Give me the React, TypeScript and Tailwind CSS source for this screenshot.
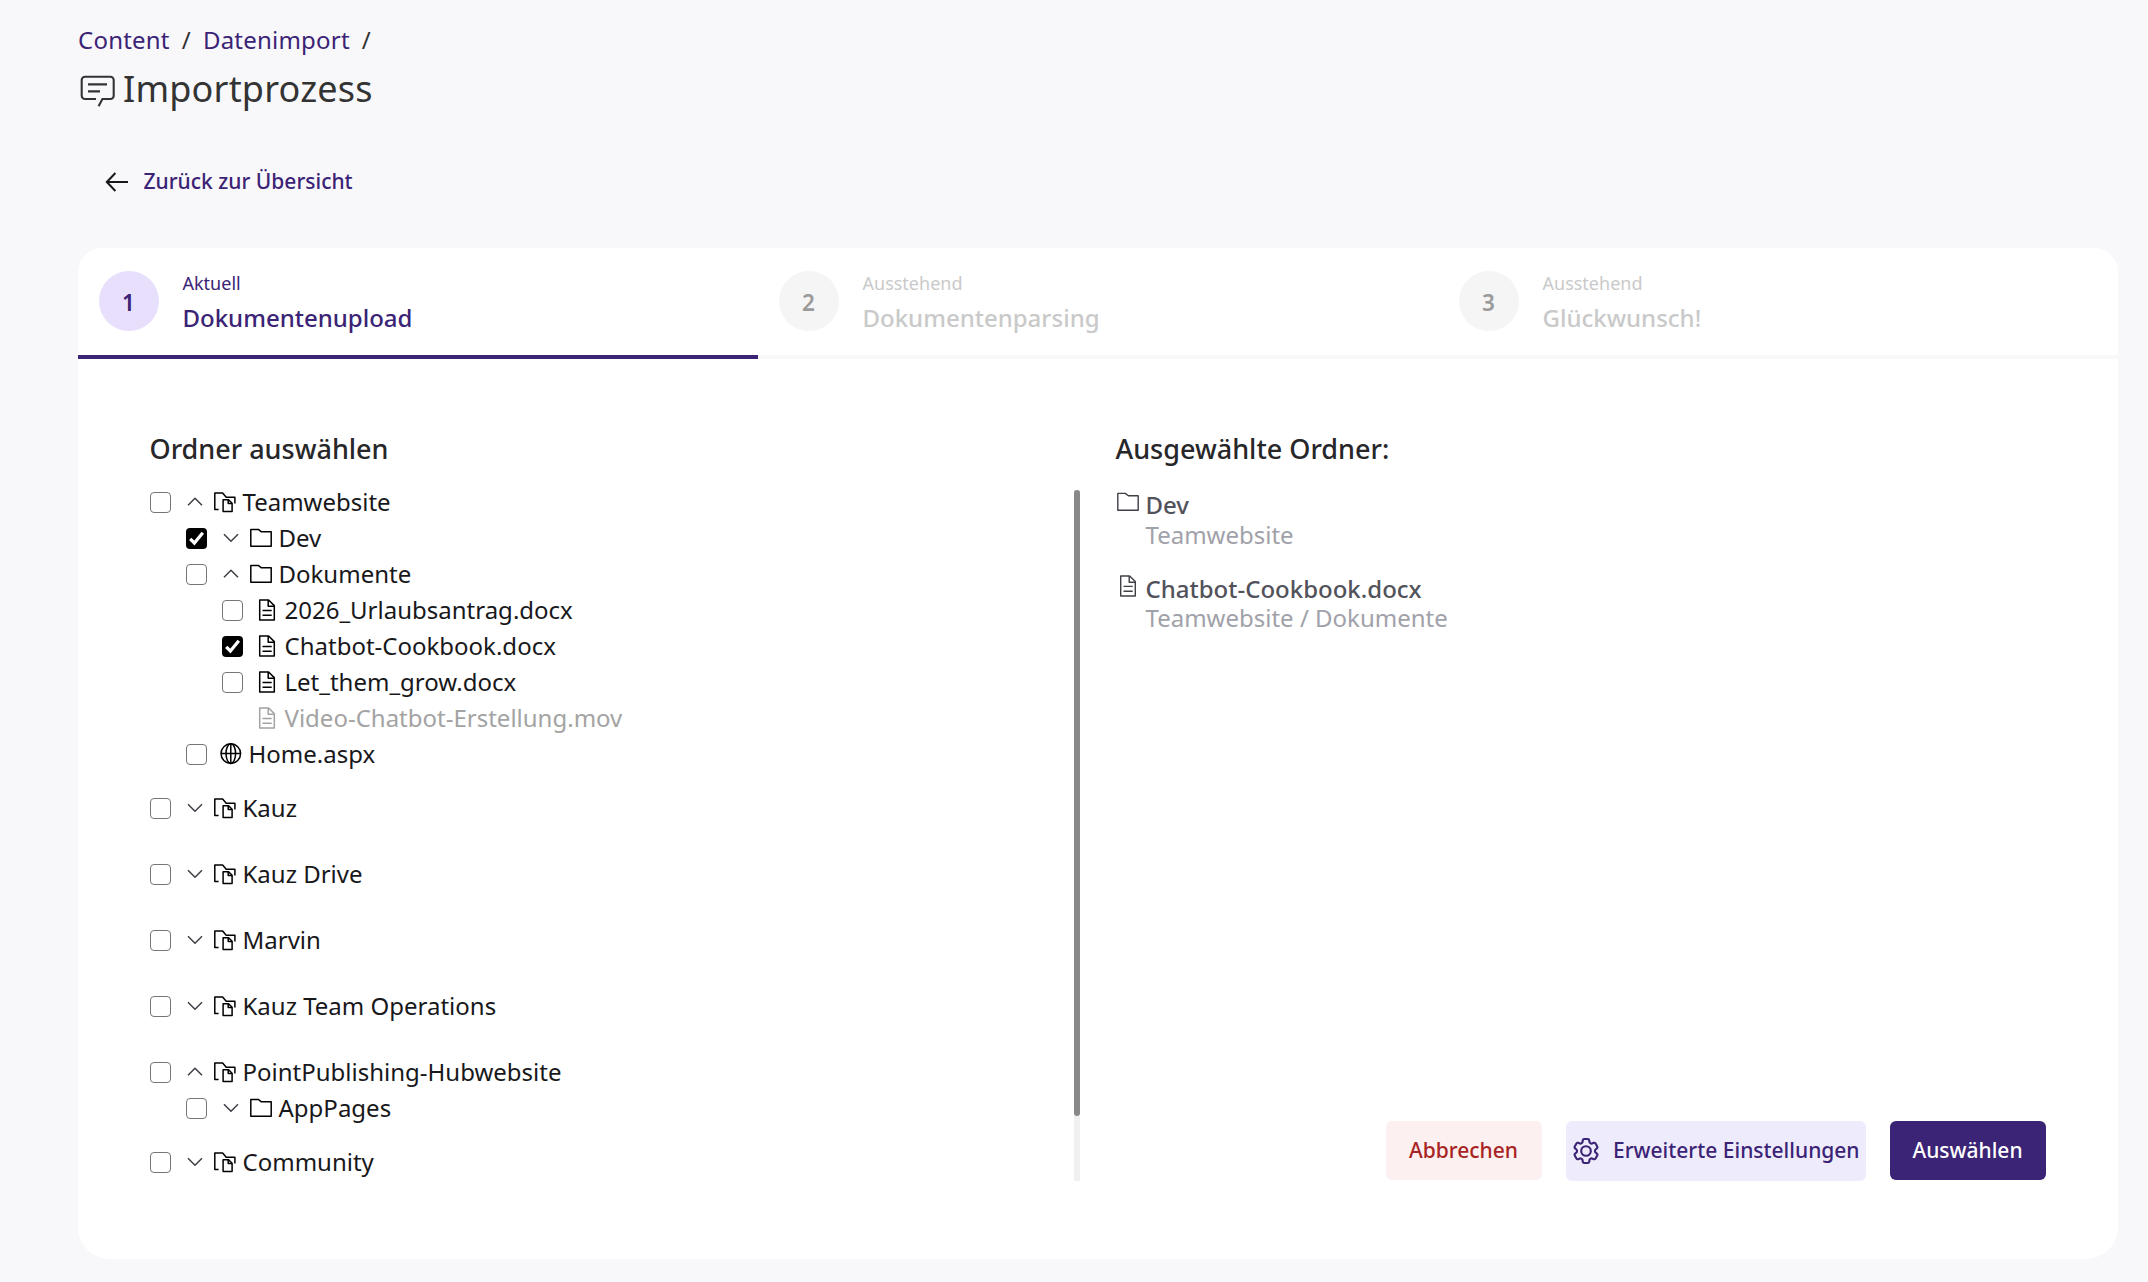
import type { ReactNode } from 'react';

type NodeKind = 'site' | 'folder' | 'file' | 'page';

interface TreeNode {
  name: string;
  kind: NodeKind;
  checked?: boolean;
  disabled?: boolean;
  expanded?: boolean;
  children?: TreeNode[];
}

const tree: TreeNode[] = [
  {
    name: 'Teamwebsite',
    kind: 'site',
    expanded: true,
    children: [
      { name: 'Dev', kind: 'folder', checked: true },
      {
        name: 'Dokumente',
        kind: 'folder',
        expanded: true,
        children: [
          { name: '2026_Urlaubsantrag.docx', kind: 'file' },
          { name: 'Chatbot-Cookbook.docx', kind: 'file', checked: true },
          { name: 'Let_them_grow.docx', kind: 'file' },
          { name: 'Video-Chatbot-Erstellung.mov', kind: 'file', disabled: true },
        ],
      },
      { name: 'Home.aspx', kind: 'page' },
    ],
  },
  { name: 'Kauz', kind: 'site' },
  { name: 'Kauz Drive', kind: 'site' },
  { name: 'Marvin', kind: 'site' },
  { name: 'Kauz Team Operations', kind: 'site' },
  {
    name: 'PointPublishing-Hubwebsite',
    kind: 'site',
    expanded: true,
    children: [{ name: 'AppPages', kind: 'folder' }],
  },
  { name: 'Community', kind: 'site' },
];

const steps = [
  { nr: 1, status: 'Aktuell', title: 'Dokumentenupload', active: true },
  { nr: 2, status: 'Ausstehend', title: 'Dokumentenparsing', active: false },
  { nr: 3, status: 'Ausstehend', title: 'Glückwunsch!', active: false },
];

const selection: { name: string; path: string; kind: NodeKind }[] = [
  { name: 'Dev', path: 'Teamwebsite', kind: 'folder' },
  { name: 'Chatbot-Cookbook.docx', path: 'Teamwebsite / Dokumente', kind: 'file' },
];

function Icon({ children, className = '', width = 1.5 }: { children: ReactNode; className?: string; width?: number }) {
  return (
    <svg
      viewBox="0 0 24 24"
      fill="none"
      stroke="currentColor"
      strokeWidth={width}
      strokeLinejoin="round"
      className={`size-6 shrink-0 ${className}`}
    >
      {children}
    </svg>
  );
}

function KindIcon({ kind, width }: { kind: NodeKind; width?: number }) {
  if (kind === 'site')
    return (
      <Icon width={width}>
        <path d="M5.6 19.6H1.8V3H9.6L13.2 7.3H21.9V13.6" />
        <path d="M10.1 9.8H15.6L19.1 13.3V21.4H10.1Z" />
        <path d="M15.2 9.8V13.6H19.1" />
      </Icon>
    );
  if (kind === 'folder')
    return (
      <Icon width={width}>
        <path d="M1.8 3.4H9.3L12.4 5.8H22.2V20.3H1.8Z" />
      </Icon>
    );
  if (kind === 'file')
    return (
      <Icon width={width}>
        <path d="M4.7 2H13.6L19.3 7.6V22H4.7Z" />
        <path d="M13.2 2V8.2H19.3M7.5 12.4H16.7M7.5 17.2H16.7" />
      </Icon>
    );
  return (
    <Icon width={width}>
      <circle cx="11.8" cy="11.6" r="9.8" />
      <ellipse cx="11.8" cy="11.6" rx="4.8" ry="9.8" />
      <path d="M2 11.6H21.6M11.8 1.8V21.4" />
    </Icon>
  );
}

function Checkbox({ checked }: { checked?: boolean }) {
  if (checked)
    return (
      <span role="checkbox" aria-checked="true" className="size-[21px] shrink-0 rounded bg-black text-white">
        <svg viewBox="0 0 21 21" fill="none" stroke="currentColor" strokeWidth="3.2" className="size-full">
          <path d="M4.2 10.8L8.4 15L16.8 4.8" />
        </svg>
      </span>
    );
  return (
    <span
      role="checkbox"
      aria-checked="false"
      className="size-[21px] shrink-0 rounded border border-[#767676] bg-white"
    />
  );
}

function TreeItem({ node }: { node: TreeNode }) {
  const foldable = node.kind === 'site' || node.kind === 'folder';
  return (
    <li>
      <div className={`flex h-9 items-center ${node.disabled ? 'text-[#a3a3a3]' : 'text-[#18181b]'}`}>
        {node.disabled ? <span className="w-[21px]" /> : <Checkbox checked={node.checked} />}
        {foldable && (
          <Icon className="ml-3 -mr-1.5 text-[#3f3f46]">
            <path d={node.expanded ? 'M5 15.2L12 8.2L19 15.2' : 'M5 8.2L12 15.2L19 8.2'} />
          </Icon>
        )}
        <span className="ml-3 flex items-center gap-[5.5px]">
          <span className={node.disabled ? 'text-[#a3a3a3]' : 'text-black'}>
            <KindIcon kind={node.kind} />
          </span>
          <span className="text-2xl leading-9">{node.name}</span>
        </span>
      </div>
      {node.children && (
        <ul className="pl-9">
          {node.children.map((child) => (
            <TreeItem key={child.name} node={child} />
          ))}
        </ul>
      )}
    </li>
  );
}

function Stepper() {
  return (
    <ol className="grid grid-cols-3">
      {steps.map((s) => (
        <li
          key={s.nr}
          className={`flex h-[111px] gap-[23.5px] border-b-4 pl-[21px] pt-[23px] ${
            s.active ? 'border-[#3b2375] text-[#3b2375]' : 'border-[#f8f8f8] text-[#c9c9c9]'
          }`}
        >
          <span
            className={`flex size-[60px] items-center justify-center rounded-full pt-[3px] pr-px text-[22.5px] leading-8 font-semibold ${
              s.active ? 'bg-[#e7dffc] text-[#3b2375]' : 'bg-[#f5f5f5] text-[#9b9b9b]'
            }`}
          >
            {s.nr}
          </span>
          <span className="flex flex-col gap-[5px]">
            <span className="text-lg leading-6">{s.status}</span>
            <span className="text-2xl leading-9 font-medium">{s.title}</span>
          </span>
        </li>
      ))}
    </ol>
  );
}

export default function App() {
  return (
    <div className="h-[1282px] w-[2148px] overflow-hidden bg-[#f8f8fb] pl-[78px] pt-[22px] pr-[30px] font-['Noto_Sans',sans-serif] text-[#333333]">
      <nav className="flex gap-3 text-2xl leading-9 tracking-[0.22px]">
        <a className="text-[#3b2375]">Content</a>
        <span>/</span>
        <a className="text-[#3b2375]">Datenimport</a>
        <span>/</span>
      </nav>

      <h1 className="mt-[7px] flex items-center gap-[9px] text-4xl leading-12 tracking-[0.2px]">
        <svg viewBox="0 0 36 36" fill="none" stroke="currentColor" strokeWidth="2.1" className="-mt-0.5 size-9 overflow-visible">
          <path d="M18 29H7a3.3 3.3 0 0 1-3.3-3.3V10A3.3 3.3 0 0 1 7 6.7H32.4a3.3 3.3 0 0 1 3.3 3.3V25.7a3.3 3.3 0 0 1-3.3 3.3H24.4L20.6 36.2" />
          <path d="M10 14.4H29M10 21.4H22" />
        </svg>
        Importprozess
      </h1>

      <a className="mt-[53px] flex items-center gap-[13.5px] pl-[26px] text-[21px] leading-[30px] font-medium text-[#3b2375]">
        <svg viewBox="0 0 26 26" fill="none" stroke="currentColor" strokeWidth="2" className="size-[26px] text-[#18181b]">
          <path d="M24 14H3M11.4 5L2.8 14L11.4 23" />
        </svg>
        Zurück zur Übersicht
      </a>

      <main className="mt-[52px] flex h-[1011px] flex-col overflow-hidden rounded-t-3xl rounded-b-[32px] bg-white">
        <Stepper />

        <div className="grid grid-cols-[930px_1fr] gap-9 px-[72px] pt-[72px]">
          <section>
            <h2 className="-ml-[0.5px] text-[27px] leading-9 font-medium text-[#27272a]">Ordner auswählen</h2>
            <div className="mt-[17px] flex justify-between">
              <ul>
                {tree.map((node) => (
                  <div key={node.name} className={node.children ? 'mb-[18px]' : 'mb-[30px]'}>
                    <TreeItem node={node} />
                  </div>
                ))}
              </ul>
              <div className="mt-1.5 h-[691px] w-1.5 bg-[#f0f0f0]">
                <div className="h-[626px] rounded-full bg-[#888888]" />
              </div>
            </div>
          </section>

          <section className="flex h-[750px] flex-col">
            <h2 className="-ml-[0.5px] text-[27px] leading-9 font-medium text-[#27272a]">Ausgewählte Ordner:</h2>
            <ul className="mt-[23px] flex flex-col gap-[24.5px]">
              {selection.map((item) => (
                <li key={item.name} className="flex gap-[5.5px] text-2xl leading-[29.5px] text-[#52525b]">
                  <span className="text-[#3f3f46]">
                    <KindIcon kind={item.kind} width={1.4} />
                  </span>
                  <div>
                    <p className="font-medium">{item.name}</p>
                    <p className="text-[#a1a1aa]">{item.path}</p>
                  </div>
                </li>
              ))}
            </ul>
            <div className="mt-auto flex justify-end gap-6 text-[21px] font-medium">
              <button className="h-[59px] w-[156px] rounded-md bg-[#fdf0f0] pr-px text-[#a82424]">Abbrechen</button>
              <button className="flex h-[60px] w-[300px] items-center gap-[11px] rounded-md bg-[#eeecfc] pl-1 whitespace-nowrap text-[#3b2375]">
                <svg
                  viewBox="0 0 24 24"
                  fill="none"
                  stroke="currentColor"
                  strokeWidth="1.6"
                  strokeLinejoin="round"
                  className="size-8 shrink-0"
                >
                  <path d="M9.594 3.94c.09-.542.56-.94 1.11-.94h2.593c.55 0 1.02.398 1.11.94l.213 1.281c.063.374.313.686.645.87.074.04.147.083.22.127.325.196.72.257 1.075.124l1.217-.456a1.125 1.125 0 0 1 1.37.49l1.296 2.247a1.125 1.125 0 0 1-.26 1.431l-1.003.827c-.293.241-.438.613-.43.992a7.723 7.723 0 0 1 0 .255c-.008.378.137.75.43.991l1.004.827c.424.35.534.955.26 1.43l-1.298 2.247a1.125 1.125 0 0 1-1.369.491l-1.217-.456c-.355-.133-.75-.072-1.076.124a6.47 6.47 0 0 1-.22.128c-.331.183-.581.495-.644.869l-.213 1.281c-.09.543-.56.94-1.11.94h-2.594c-.55 0-1.019-.398-1.11-.94l-.213-1.281c-.062-.374-.312-.686-.644-.87a6.52 6.52 0 0 1-.22-.127c-.325-.196-.72-.257-1.076-.124l-1.217.456a1.125 1.125 0 0 1-1.369-.49l-1.297-2.247a1.125 1.125 0 0 1 .26-1.431l1.004-.827c.292-.24.437-.613.43-.991a6.932 6.932 0 0 1 0-.255c.007-.38-.138-.751-.43-.992l-1.004-.827a1.125 1.125 0 0 1-.26-1.43l1.297-2.247a1.125 1.125 0 0 1 1.37-.491l1.216.456c.356.133.751.072 1.076-.124.072-.044.146-.086.22-.128.332-.183.582-.495.644-.869l.214-1.28Z" />
                  <circle cx="12" cy="12" r="3.6" />
                </svg>
                Erweiterte Einstellungen
              </button>
              <button className="h-[59px] w-[156px] rounded-md bg-[#3b2375] pr-px text-white">Auswählen</button>
            </div>
          </section>
        </div>
      </main>
    </div>
  );
}
